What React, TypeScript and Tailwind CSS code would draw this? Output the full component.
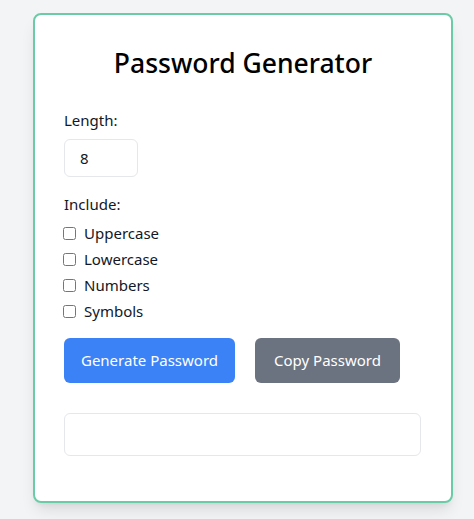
export default function App() {
  const options = ['Uppercase', 'Lowercase', 'Numbers', 'Symbols']
  return (
    <div
      className="min-h-[519px] bg-[#f3f4f6] pl-[33px] pt-[13px] text-[#111827]"
      style={{ fontFamily: '"Noto Sans", "Open Sans", sans-serif' }}
    >
      <div className="w-[420px] rounded-lg border-2 border-[#6ccba7] bg-white px-[29px] pt-[31px] pb-[45px] shadow-lg">
        <h1 className="text-center text-[26.5px] leading-[34px] font-medium text-black">Password Generator</h1>

        <div className="mt-[28px] text-[15px] leading-6">Length:</div>
        <input
          type="number"
          defaultValue={8}
          className="mt-[7px] h-[38px] w-[74px] rounded-md border border-[#e5e7eb] px-[15px] text-[15px] outline-none"
        />

        <div className="mt-[15px] text-[15px] leading-6">Include:</div>
        <div className="mt-[5px] flex flex-col gap-[2px]">
          {options.map((o) => (
            <label key={o} className="flex items-center gap-2 text-[15px] leading-6">
              <input type="checkbox" className="-ml-px h-[13px] w-[13px]" />
              {o}
            </label>
          ))}
        </div>

        <div className="mt-[15px] flex gap-5">
          <button className="h-[45px] w-[171px] rounded-md bg-[#3b82f6] text-[15px] text-white">Generate Password</button>
          <button className="h-[45px] w-[145px] rounded-md bg-[#6b7280] text-[15px] text-white">Copy Password</button>
        </div>

        <input
          type="text"
          readOnly
          className="mt-[30px] h-[43px] w-[357px] rounded-md border border-[#e5e7eb] px-3 outline-none"
        />
      </div>
    </div>
  )
}
